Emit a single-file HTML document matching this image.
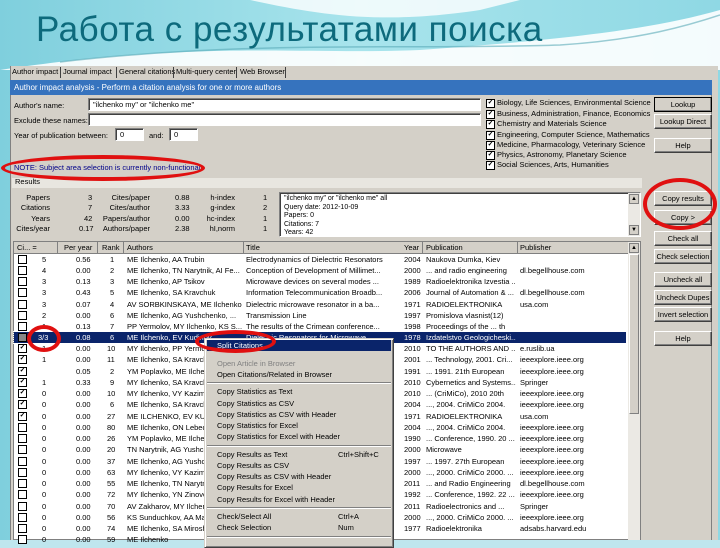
<!DOCTYPE html>
<html><head><meta charset="utf-8"><style>
*{margin:0;padding:0;box-sizing:border-box}
body{width:720px;height:540px;overflow:hidden;position:relative;font-family:"Liberation Sans",sans-serif;background:#bfe6ee}
.a{position:absolute;white-space:nowrap}
.s{font-size:7.5px;color:#000;line-height:10px}
.btn{position:absolute;left:654px;width:58px;height:15px;background:#d4d0c8;border:1px solid;border-color:#fff #404040 #404040 #fff;font-size:7.5px;text-align:center;line-height:13px;box-shadow:inset -1px -1px 0 #808080;white-space:nowrap;overflow:hidden}
.inp{position:absolute;background:#fff;border:1px solid;border-color:#808080 #fff #fff #808080;box-shadow:inset 1px 1px 0 #404040;font-size:7.5px;line-height:11px;padding-left:4px;white-space:nowrap;overflow:hidden}
.cb{position:absolute;width:9px;height:9px;border:1.5px solid #000;background:#fff;font-size:7px;line-height:6px;text-align:center;font-weight:bold;overflow:hidden}
.row{position:absolute;left:14px;width:612px;height:11px;font-size:7.5px;line-height:11px}
.row span{position:absolute;white-space:nowrap;overflow:hidden;top:0}
.row span.cb{top:1px}
.row span:nth-child(5){width:115px}
.row span:nth-child(6){width:150px}
.row span:nth-child(8){width:90px}
.mi{position:absolute;left:217px;font-size:7.5px;line-height:11px;white-space:nowrap}
.sep{position:absolute;left:207px;width:184px;height:2px;border-top:1px solid #808080;border-bottom:1px solid #fff}
.ell{position:absolute;border:4px solid #e01010;border-radius:50%}
</style></head><body>
<svg class="a" style="left:0;top:0" width="720" height="540">
<defs><linearGradient id="g" x1="0" y1="0" x2="1" y2="0"><stop offset="0" stop-color="#7fcfdd"/><stop offset=".5" stop-color="#a8e4ec"/><stop offset="1" stop-color="#8fd8e4"/></linearGradient></defs>
<rect width="720" height="540" fill="url(#g)"/>
<path d="M0 70 C200 40 300 55 420 50 C560 40 650 30 720 10 L720 70 Z" fill="#fff" opacity=".9"/>
<path d="M250 0 C320 15 380 25 480 10 L520 0 Z" fill="#fff" opacity=".8"/>
<path d="M60 62 C250 40 400 50 560 45 C640 40 690 25 720 15" stroke="#5aaab8" stroke-width="1.5" fill="none" opacity=".6"/>
</svg>
<div class="a" style="left:36px;top:10px;font-size:35px;color:#0d6a7c;letter-spacing:0.5px">Работа с результатами поиска</div>

<div class="a" style="left:10px;top:66px;width:708px;height:474px;background:#d4d0c8;border-left:1px solid #808080"></div>
<div class="a" style="left:711px;top:80px;width:1px;height:460px;background:#808080"></div>
<div class="a s" style="left:12px;top:67px">Author impact</div>
<div class="a" style="left:60px;top:67px;width:1px;height:11px;background:#404040"></div>
<div class="a s" style="left:63px;top:67px">Journal impact</div>
<div class="a" style="left:116px;top:67px;width:1px;height:11px;background:#404040"></div>
<div class="a s" style="left:119px;top:67px">General citations</div>
<div class="a" style="left:173px;top:67px;width:1px;height:11px;background:#404040"></div>
<div class="a s" style="left:176px;top:67px">Multi-query center</div>
<div class="a" style="left:236px;top:67px;width:1px;height:11px;background:#404040"></div>
<div class="a s" style="left:240px;top:67px">Web Browser</div>
<div class="a" style="left:285px;top:67px;width:1px;height:11px;background:#404040"></div>
<div class="a" style="left:10px;top:80px;width:702px;height:15px;background:#3673be;color:#fff;font-size:8px;line-height:15px;padding-left:4px">Author impact analysis - Perform a citation analysis for one or more authors</div>
<div class="a s" style="left:14px;top:101px">Author's name:</div>
<div class="inp" style="left:88px;top:98px;width:393px;height:13px">"ilchenko my" or "ilchenko me"</div>
<div class="a s" style="left:14px;top:116px">Exclude these names:</div>
<div class="inp" style="left:88px;top:113px;width:393px;height:13px"></div>
<div class="a s" style="left:14px;top:131px">Year of publication between:</div>
<div class="inp" style="left:115px;top:128px;width:29px;height:13px">0</div>
<div class="a s" style="left:149px;top:131px">and:</div>
<div class="inp" style="left:169px;top:128px;width:29px;height:13px">0</div>
<div class="a s" style="left:14px;top:163px;color:#00008a">NOTE: Subject area selection is currently non-functional</div>
<div class="cb" style="left:486px;top:99px">✓</div><div class="a s" style="left:497px;top:98px">Biology, Life Sciences, Environmental Science</div>
<div class="cb" style="left:486px;top:110px">✓</div><div class="a s" style="left:497px;top:109px">Business, Administration, Finance, Economics</div>
<div class="cb" style="left:486px;top:120px">✓</div><div class="a s" style="left:497px;top:119px">Chemistry and Materials Science</div>
<div class="cb" style="left:486px;top:131px">✓</div><div class="a s" style="left:497px;top:130px">Engineering, Computer Science, Mathematics</div>
<div class="cb" style="left:486px;top:141px">✓</div><div class="a s" style="left:497px;top:140px">Medicine, Pharmacology, Veterinary Science</div>
<div class="cb" style="left:486px;top:151px">✓</div><div class="a s" style="left:497px;top:150px">Physics, Astronomy, Planetary Science</div>
<div class="cb" style="left:486px;top:161px">✓</div><div class="a s" style="left:497px;top:160px">Social Sciences, Arts, Humanities</div>
<div class="btn" style="top:97px;border:1px solid #000">Lookup</div>
<div class="btn" style="top:114px">Lookup Direct</div>
<div class="btn" style="top:138px">Help</div>
<div class="a" style="left:12px;top:178px;width:630px;height:10px;background:#e8e6e0"></div>
<div class="a s" style="left:15px;top:177px">Results</div>
<div class="a s" style="left:14px;top:193px;width:36px;text-align:right">Papers</div><div class="a s" style="left:88px;top:193px">3</div>
<div class="a s" style="left:14px;top:203px;width:36px;text-align:right">Citations</div><div class="a s" style="left:88px;top:203px">7</div>
<div class="a s" style="left:14px;top:214px;width:36px;text-align:right">Years</div><div class="a s" style="left:84px;top:214px">42</div>
<div class="a s" style="left:14px;top:224px;width:36px;text-align:right">Cites/year</div><div class="a s" style="left:79px;top:224px">0.17</div>
<div class="a s" style="left:98px;top:193px;width:52px;text-align:right">Cites/paper</div><div class="a s" style="left:175px;top:193px">0.88</div>
<div class="a s" style="left:98px;top:203px;width:52px;text-align:right">Cites/author</div><div class="a s" style="left:175px;top:203px">3.33</div>
<div class="a s" style="left:98px;top:214px;width:52px;text-align:right">Papers/author</div><div class="a s" style="left:175px;top:214px">0.00</div>
<div class="a s" style="left:98px;top:224px;width:52px;text-align:right">Authors/paper</div><div class="a s" style="left:175px;top:224px">2.38</div>
<div class="a s" style="left:200px;top:193px;width:35px;text-align:right">h-index</div><div class="a s" style="left:263px;top:193px">1</div>
<div class="a s" style="left:200px;top:203px;width:35px;text-align:right">g-index</div><div class="a s" style="left:263px;top:203px">2</div>
<div class="a s" style="left:200px;top:214px;width:35px;text-align:right">hc-index</div><div class="a s" style="left:263px;top:214px">1</div>
<div class="a s" style="left:200px;top:224px;width:35px;text-align:right">hI,norm</div><div class="a s" style="left:263px;top:224px">1</div>
<div class="inp" style="left:279px;top:192px;width:362px;height:45px;line-height:8.6px;font-size:7px;padding-top:2px">"ilchenko my" or "ilchenko me" all<br>Query date: 2012-10-09<br>Papers: 0<br>Citations: 7<br>Years: 42</div>
<div class="a" style="left:628px;top:193px;width:12px;height:43px;background:#ebe9e4"></div>
<div class="a" style="left:629px;top:194px;width:10px;height:10px;background:#d4d0c8;border:1px solid #808080;font-size:6px;text-align:center;line-height:8px">▲</div>
<div class="a" style="left:629px;top:225px;width:10px;height:10px;background:#d4d0c8;border:1px solid #808080;font-size:6px;text-align:center;line-height:8px">▼</div>
<div class="btn" style="top:191px">Copy results</div>
<div class="btn" style="top:210px">Copy &gt;</div>
<div class="btn" style="top:231px">Check all</div>
<div class="btn" style="top:249px">Check selection</div>
<div class="btn" style="top:272px">Uncheck all</div>
<div class="btn" style="top:290px">Uncheck Dupes</div>
<div class="btn" style="top:307px">Invert selection</div>
<div class="btn" style="top:331px">Help</div>
<div class="a" style="left:13px;top:241px;width:628px;height:299px;background:#fff;border:1px solid #808080"></div>
<div class="a" style="left:628px;top:242px;width:12px;height:298px;background:#ebe9e4"></div>
<div class="a" style="left:629px;top:243px;width:10px;height:10px;background:#d4d0c8;border:1px solid #808080;font-size:6px;text-align:center;line-height:8px">▲</div>
<div class="a" style="left:629px;top:254px;width:10px;height:160px;background:#d4d0c8;border:1px solid;border-color:#fff #808080 #808080 #fff"></div>
<div class="a s" style="left:14px;top:242px;width:614px;height:12px;background:#d4d0c8;border-bottom:1px solid #808080"></div>
<div class="a s" style="left:17px;top:243px">Ci... =</div>
<div class="a s" style="left:64px;top:243px">Per year</div>
<div class="a s" style="left:102px;top:243px">Rank</div>
<div class="a s" style="left:127px;top:243px">Authors</div>
<div class="a s" style="left:246px;top:243px">Title</div>
<div class="a s" style="left:404px;top:243px">Year</div>
<div class="a s" style="left:426px;top:243px">Publication</div>
<div class="a s" style="left:520px;top:243px">Publisher</div>
<div class="a" style="left:57px;top:242px;width:1px;height:12px;background:#808080"></div>
<div class="a" style="left:97px;top:242px;width:1px;height:12px;background:#808080"></div>
<div class="a" style="left:123px;top:242px;width:1px;height:12px;background:#808080"></div>
<div class="a" style="left:243px;top:242px;width:1px;height:12px;background:#808080"></div>
<div class="a" style="left:422px;top:242px;width:1px;height:12px;background:#808080"></div>
<div class="a" style="left:517px;top:242px;width:1px;height:12px;background:#808080"></div>

<div class="row" style="top:254px"><span class="cb" style="left:4px"></span><span style="left:28px">5</span><span style="left:62px">0.56</span><span style="left:96px">1</span><span style="left:113px">ME Ilchenko, AA Trubin</span><span style="left:232px">Electrodynamics of Dielectric Resonators</span><span style="left:390px">2004</span><span style="left:412px">Naukova Dumka, Kiev</span></div>
<div class="row" style="top:265px"><span class="cb" style="left:4px"></span><span style="left:28px">4</span><span style="left:62px">0.00</span><span style="left:96px">2</span><span style="left:113px">ME Ilchenko, TN Narytnik, AI Fe...</span><span style="left:232px">Conception of Development of Millimet...</span><span style="left:390px">2000</span><span style="left:412px">... and radio engineering</span><span style="left:506px">dl.begellhouse.com</span></div>
<div class="row" style="top:276px"><span class="cb" style="left:4px"></span><span style="left:28px">3</span><span style="left:62px">0.13</span><span style="left:96px">3</span><span style="left:113px">ME Ilchenko, AP Tsikov</span><span style="left:232px">Microwave devices on several modes ...</span><span style="left:390px">1989</span><span style="left:412px">Radioelektronika Izvestia ...</span></div>
<div class="row" style="top:287px"><span class="cb" style="left:4px"></span><span style="left:28px">3</span><span style="left:62px">0.43</span><span style="left:96px">5</span><span style="left:113px">ME Ilchenko, SA Kravchuk</span><span style="left:232px">Information Telecommunication Broadb...</span><span style="left:390px">2006</span><span style="left:412px">Journal of Automation &amp; ...</span><span style="left:506px">dl.begellhouse.com</span></div>
<div class="row" style="top:299px"><span class="cb" style="left:4px"></span><span style="left:28px">3</span><span style="left:62px">0.07</span><span style="left:96px">4</span><span style="left:113px">AV SORBKINSKAYA, ME Ilchenko</span><span style="left:232px">Dielectric microwave resonator in a ba...</span><span style="left:390px">1971</span><span style="left:412px">RADIOELEKTRONIKA</span><span style="left:506px">usa.com</span></div>
<div class="row" style="top:310px"><span class="cb" style="left:4px"></span><span style="left:28px">2</span><span style="left:62px">0.00</span><span style="left:96px">6</span><span style="left:113px">ME Ilchenko, AG Yushchenko, ...</span><span style="left:232px">Transmission Line</span><span style="left:390px">1997</span><span style="left:412px">Promislova vlasnist(12)</span></div>
<div class="row" style="top:321px"><span class="cb" style="left:4px"></span><span style="left:28px">1</span><span style="left:62px">0.13</span><span style="left:96px">7</span><span style="left:113px">PP Yermolov, MY Ilchenko, KS S...</span><span style="left:232px">The results of the Crimean conference...</span><span style="left:390px">1998</span><span style="left:412px">Proceedings of the ... th</span></div>
<div class="row" style="top:332px;background:#0a246a;color:#fff;outline:1px dotted #fff"><span class="cb" style="left:4px;background:#888"></span><span style="left:24px">3/3</span><span style="left:62px">0.08</span><span style="left:96px">6</span><span style="left:113px">ME Ilchenko, EV Kudinov</span><span style="left:232px">Dielectric Resonators for Microwave...</span><span style="left:390px">1978</span><span style="left:412px">Izdatelstvo Geologicheski...</span></div>
<div class="row" style="top:343px"><span class="cb" style="left:4px">✓</span><span style="left:28px">1</span><span style="left:62px">0.00</span><span style="left:93px">10</span><span style="left:113px">MY Ilchenko, PP Yermolov</span><span style="left:232px"></span><span style="left:390px">2010</span><span style="left:412px">TO THE AUTHORS AND ...</span><span style="left:506px">e.ruslib.ua</span></div>
<div class="row" style="top:354px"><span class="cb" style="left:4px">✓</span><span style="left:28px">1</span><span style="left:62px">0.00</span><span style="left:93px">11</span><span style="left:113px">ME Ilchenko, SA Kravchuk</span><span style="left:232px"></span><span style="left:390px">2001</span><span style="left:412px">... Technology, 2001. Cri...</span><span style="left:506px">ieeexplore.ieee.org</span></div>
<div class="row" style="top:366px"><span class="cb" style="left:4px">✓</span><span style="left:28px"></span><span style="left:62px">0.05</span><span style="left:96px">2</span><span style="left:113px">YM Poplavko, ME Ilchenko</span><span style="left:232px"></span><span style="left:390px">1991</span><span style="left:412px">... 1991. 21th European</span><span style="left:506px">ieeexplore.ieee.org</span></div>
<div class="row" style="top:377px"><span class="cb" style="left:4px">✓</span><span style="left:28px">1</span><span style="left:62px">0.33</span><span style="left:96px">9</span><span style="left:113px">MY Ilchenko, SA Kravchuk</span><span style="left:232px"></span><span style="left:390px">2010</span><span style="left:412px">Cybernetics and Systems...</span><span style="left:506px">Springer</span></div>
<div class="row" style="top:388px"><span class="cb" style="left:4px">✓</span><span style="left:28px">0</span><span style="left:62px">0.00</span><span style="left:93px">10</span><span style="left:113px">MY Ilchenko, VY Kazimirenko</span><span style="left:232px"></span><span style="left:390px">2010</span><span style="left:412px">... (CriMiCo), 2010 20th</span><span style="left:506px">ieeexplore.ieee.org</span></div>
<div class="row" style="top:399px"><span class="cb" style="left:4px">✓</span><span style="left:28px">0</span><span style="left:62px">0.00</span><span style="left:96px">6</span><span style="left:113px">ME Ilchenko, SA Kravchuk</span><span style="left:232px"></span><span style="left:390px">2004</span><span style="left:412px">..., 2004. CriMiCo 2004.</span><span style="left:506px">ieeexplore.ieee.org</span></div>
<div class="row" style="top:411px"><span class="cb" style="left:4px">✓</span><span style="left:28px">0</span><span style="left:62px">0.00</span><span style="left:93px">27</span><span style="left:113px">ME ILCHENKO, EV KUDINOV</span><span style="left:232px"></span><span style="left:390px">1971</span><span style="left:412px">RADIOELEKTRONIKA</span><span style="left:506px">usa.com</span></div>
<div class="row" style="top:422px"><span class="cb" style="left:4px"></span><span style="left:28px">0</span><span style="left:62px">0.00</span><span style="left:93px">80</span><span style="left:113px">ME Ilchenko, ON Lebedev</span><span style="left:232px"></span><span style="left:390px">2004</span><span style="left:412px">..., 2004. CriMiCo 2004.</span><span style="left:506px">ieeexplore.ieee.org</span></div>
<div class="row" style="top:433px"><span class="cb" style="left:4px"></span><span style="left:28px">0</span><span style="left:62px">0.00</span><span style="left:93px">26</span><span style="left:113px">YM Poplavko, ME Ilchenko</span><span style="left:232px"></span><span style="left:390px">1990</span><span style="left:412px">... Conference, 1990. 20 ...</span><span style="left:506px">ieeexplore.ieee.org</span></div>
<div class="row" style="top:444px"><span class="cb" style="left:4px"></span><span style="left:28px">0</span><span style="left:62px">0.00</span><span style="left:93px">20</span><span style="left:113px">TN Narytnik, AG Yushchenko</span><span style="left:232px"></span><span style="left:390px">2000</span><span style="left:412px">Microwave</span><span style="left:506px">ieeexplore.ieee.org</span></div>
<div class="row" style="top:456px"><span class="cb" style="left:4px"></span><span style="left:28px">0</span><span style="left:62px">0.00</span><span style="left:93px">37</span><span style="left:113px">ME Ilchenko, AG Yushchenko</span><span style="left:232px"></span><span style="left:390px">1997</span><span style="left:412px">... 1997. 27th European</span><span style="left:506px">ieeexplore.ieee.org</span></div>
<div class="row" style="top:467px"><span class="cb" style="left:4px"></span><span style="left:28px">0</span><span style="left:62px">0.00</span><span style="left:93px">63</span><span style="left:113px">MY Ilchenko, VY Kazimirenko</span><span style="left:232px"></span><span style="left:390px">2000</span><span style="left:412px">..., 2000. CriMiCo 2000. ...</span><span style="left:506px">ieeexplore.ieee.org</span></div>
<div class="row" style="top:478px"><span class="cb" style="left:4px"></span><span style="left:28px">0</span><span style="left:62px">0.00</span><span style="left:93px">55</span><span style="left:113px">ME Ilchenko, TN Narytnik</span><span style="left:232px"></span><span style="left:390px">2011</span><span style="left:412px">... and Radio Engineering</span><span style="left:506px">dl.begellhouse.com</span></div>
<div class="row" style="top:489px"><span class="cb" style="left:4px"></span><span style="left:28px">0</span><span style="left:62px">0.00</span><span style="left:93px">72</span><span style="left:113px">MY Ilchenko, YN Zinovev</span><span style="left:232px"></span><span style="left:390px">1992</span><span style="left:412px">... Conference, 1992. 22 ...</span><span style="left:506px">ieeexplore.ieee.org</span></div>
<div class="row" style="top:501px"><span class="cb" style="left:4px"></span><span style="left:28px">0</span><span style="left:62px">0.00</span><span style="left:93px">70</span><span style="left:113px">AV Zakharov, MY Ilchenko</span><span style="left:232px"></span><span style="left:390px">2011</span><span style="left:412px">Radioelectronics and ...</span><span style="left:506px">Springer</span></div>
<div class="row" style="top:512px"><span class="cb" style="left:4px"></span><span style="left:28px">0</span><span style="left:62px">0.00</span><span style="left:93px">56</span><span style="left:113px">KS Sunduchkov, AA Makarov</span><span style="left:232px"></span><span style="left:390px">2000</span><span style="left:412px">..., 2000. CriMiCo 2000. ...</span><span style="left:506px">ieeexplore.ieee.org</span></div>
<div class="row" style="top:523px"><span class="cb" style="left:4px"></span><span style="left:28px">0</span><span style="left:62px">0.00</span><span style="left:93px">74</span><span style="left:113px">ME Ilchenko, SA Miroshn</span><span style="left:232px"></span><span style="left:390px">1977</span><span style="left:412px">Radioelektronika</span><span style="left:506px">adsabs.harvard.edu</span></div>
<div class="row" style="top:534px"><span class="cb" style="left:4px"></span><span style="left:28px">0</span><span style="left:62px">0.00</span><span style="left:93px">59</span><span style="left:113px">ME Ilchenko</span></div>

<div class="a" style="left:204px;top:338px;width:190px;height:210px;background:#d4d0c8;border:1px solid;border-color:#d4d0c8 #404040 #404040 #d4d0c8;box-shadow:inset 1px 1px 0 #fff,inset -1px -1px 0 #808080"></div>
<div class="a" style="left:207px;top:340px;width:184px;height:11px;background:#0a246a"></div>
<div class="mi" style="top:340px;color:#fff">Split Citations</div>
<div class="mi" style="top:358px;color:#808080">Open Article in Browser</div>
<div class="mi" style="top:369px">Open Citations/Related in Browser</div>
<div class="sep" style="top:382px"></div>
<div class="mi" style="top:386px">Copy Statistics as Text</div>
<div class="mi" style="top:398px">Copy Statistics as CSV</div>
<div class="mi" style="top:409px">Copy Statistics as CSV with Header</div>
<div class="mi" style="top:420px">Copy Statistics for Excel</div>
<div class="mi" style="top:431px">Copy Statistics for Excel with Header</div>
<div class="sep" style="top:445px"></div>
<div class="mi" style="top:449px">Copy Results as Text</div><div class="mi" style="left:338px;top:449px">Ctrl+Shift+C</div>
<div class="mi" style="top:460px">Copy Results as CSV</div>
<div class="mi" style="top:471px">Copy Results as CSV with Header</div>
<div class="mi" style="top:482px">Copy Results for Excel</div>
<div class="mi" style="top:494px">Copy Results for Excel with Header</div>
<div class="sep" style="top:507px"></div>
<div class="mi" style="top:511px">Check/Select All</div><div class="mi" style="left:338px;top:511px">Ctrl+A</div>
<div class="mi" style="top:522px">Check Selection</div><div class="mi" style="left:338px;top:522px">Num</div>
<div class="sep" style="top:536px"></div>

<div class="ell" style="left:1px;top:155px;width:204px;height:26px"></div>
<div class="ell" style="left:643px;top:178px;width:74px;height:52px"></div>
<div class="ell" style="left:27px;top:325px;width:34px;height:27px"></div>
<div class="ell" style="left:195px;top:330px;width:81px;height:23px"></div>
</body></html>
